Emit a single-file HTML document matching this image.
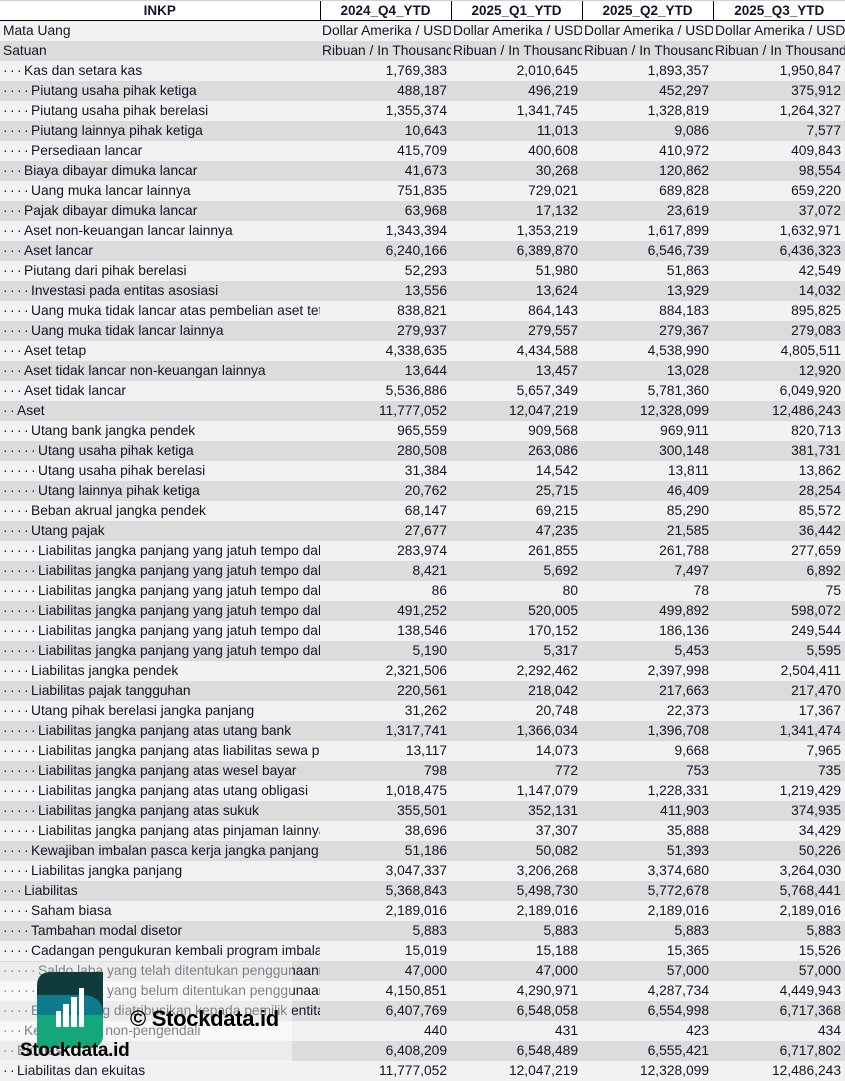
<!DOCTYPE html>
<html><head><meta charset="utf-8"><style>
body{margin:0;width:845px;height:1081px;overflow:hidden;background:#fff;font-family:"Liberation Sans",Arial,sans-serif;font-size:13.8px;color:#141428;position:relative}
table{border-collapse:collapse;table-layout:fixed;width:845px;position:absolute;top:0;left:0}
td{height:20px;padding:0;white-space:nowrap;overflow:hidden;line-height:20px}
col.a{width:320px}col.b{width:131px}col.c{width:131px}col.d{width:131px}col.e{width:132px}
tr.h td{background:#fff;font-weight:bold;text-align:center;border-bottom:1.5px solid #000;border-left:1px solid #000;border-top:1px solid #d0d0d0;height:19px;line-height:19px;font-size:13.5px}
tr.h td:first-child{border-left:none}
tr:nth-child(even) td{background:#f2f2f2}
tr:nth-child(odd) td{background:#dcdcdc}
tr.h td{background:#fff!important}
td.l{padding-left:3px;text-align:left}
td.n{text-align:right;padding-right:4px}
td.t{text-align:left;padding-left:2px;text-overflow:clip}
i{font-style:normal;display:inline-block;width:7px;text-align:left}
.ov{position:absolute;left:0;top:962px;width:292px;height:100px;background:rgba(255,255,255,0.45)}
.wm1{position:absolute;left:130px;top:1006px;font-weight:bold;font-size:22px;color:#000;letter-spacing:-0.3px}
.wm2{position:absolute;left:20px;top:1040px;font-weight:bold;font-size:19px;color:#000;letter-spacing:-0.3px}
</style></head><body>
<table>
<colgroup><col class="a"><col class="b"><col class="c"><col class="d"><col class="e"></colgroup>
<tr class="h"><td>INKP</td><td>2024_Q4_YTD</td><td>2025_Q1_YTD</td><td>2025_Q2_YTD</td><td>2025_Q3_YTD</td></tr>
<tr><td class="l">Mata Uang</td><td class="t">Dollar Amerika / USD</td><td class="t">Dollar Amerika / USD</td><td class="t">Dollar Amerika / USD</td><td class="t">Dollar Amerika / USD</td></tr>
<tr><td class="l">Satuan</td><td class="t">Ribuan / In Thousand</td><td class="t">Ribuan / In Thousand</td><td class="t">Ribuan / In Thousand</td><td class="t">Ribuan / In Thousand</td></tr>
<tr><td class="l"><i>·</i><i>·</i><i>·</i>Kas dan setara kas</td><td class="n">1,769,383</td><td class="n">2,010,645</td><td class="n">1,893,357</td><td class="n">1,950,847</td></tr>
<tr><td class="l"><i>·</i><i>·</i><i>·</i><i>·</i>Piutang usaha pihak ketiga</td><td class="n">488,187</td><td class="n">496,219</td><td class="n">452,297</td><td class="n">375,912</td></tr>
<tr><td class="l"><i>·</i><i>·</i><i>·</i><i>·</i>Piutang usaha pihak berelasi</td><td class="n">1,355,374</td><td class="n">1,341,745</td><td class="n">1,328,819</td><td class="n">1,264,327</td></tr>
<tr><td class="l"><i>·</i><i>·</i><i>·</i><i>·</i>Piutang lainnya pihak ketiga</td><td class="n">10,643</td><td class="n">11,013</td><td class="n">9,086</td><td class="n">7,577</td></tr>
<tr><td class="l"><i>·</i><i>·</i><i>·</i><i>·</i>Persediaan lancar</td><td class="n">415,709</td><td class="n">400,608</td><td class="n">410,972</td><td class="n">409,843</td></tr>
<tr><td class="l"><i>·</i><i>·</i><i>·</i>Biaya dibayar dimuka lancar</td><td class="n">41,673</td><td class="n">30,268</td><td class="n">120,862</td><td class="n">98,554</td></tr>
<tr><td class="l"><i>·</i><i>·</i><i>·</i><i>·</i>Uang muka lancar lainnya</td><td class="n">751,835</td><td class="n">729,021</td><td class="n">689,828</td><td class="n">659,220</td></tr>
<tr><td class="l"><i>·</i><i>·</i><i>·</i>Pajak dibayar dimuka lancar</td><td class="n">63,968</td><td class="n">17,132</td><td class="n">23,619</td><td class="n">37,072</td></tr>
<tr><td class="l"><i>·</i><i>·</i><i>·</i>Aset non-keuangan lancar lainnya</td><td class="n">1,343,394</td><td class="n">1,353,219</td><td class="n">1,617,899</td><td class="n">1,632,971</td></tr>
<tr><td class="l"><i>·</i><i>·</i><i>·</i>Aset lancar</td><td class="n">6,240,166</td><td class="n">6,389,870</td><td class="n">6,546,739</td><td class="n">6,436,323</td></tr>
<tr><td class="l"><i>·</i><i>·</i><i>·</i>Piutang dari pihak berelasi</td><td class="n">52,293</td><td class="n">51,980</td><td class="n">51,863</td><td class="n">42,549</td></tr>
<tr><td class="l"><i>·</i><i>·</i><i>·</i><i>·</i>Investasi pada entitas asosiasi</td><td class="n">13,556</td><td class="n">13,624</td><td class="n">13,929</td><td class="n">14,032</td></tr>
<tr><td class="l"><i>·</i><i>·</i><i>·</i><i>·</i>Uang muka tidak lancar atas pembelian aset tetap</td><td class="n">838,821</td><td class="n">864,143</td><td class="n">884,183</td><td class="n">895,825</td></tr>
<tr><td class="l"><i>·</i><i>·</i><i>·</i><i>·</i>Uang muka tidak lancar lainnya</td><td class="n">279,937</td><td class="n">279,557</td><td class="n">279,367</td><td class="n">279,083</td></tr>
<tr><td class="l"><i>·</i><i>·</i><i>·</i>Aset tetap</td><td class="n">4,338,635</td><td class="n">4,434,588</td><td class="n">4,538,990</td><td class="n">4,805,511</td></tr>
<tr><td class="l"><i>·</i><i>·</i><i>·</i>Aset tidak lancar non-keuangan lainnya</td><td class="n">13,644</td><td class="n">13,457</td><td class="n">13,028</td><td class="n">12,920</td></tr>
<tr><td class="l"><i>·</i><i>·</i><i>·</i>Aset tidak lancar</td><td class="n">5,536,886</td><td class="n">5,657,349</td><td class="n">5,781,360</td><td class="n">6,049,920</td></tr>
<tr><td class="l"><i>·</i><i>·</i>Aset</td><td class="n">11,777,052</td><td class="n">12,047,219</td><td class="n">12,328,099</td><td class="n">12,486,243</td></tr>
<tr><td class="l"><i>·</i><i>·</i><i>·</i><i>·</i>Utang bank jangka pendek</td><td class="n">965,559</td><td class="n">909,568</td><td class="n">969,911</td><td class="n">820,713</td></tr>
<tr><td class="l"><i>·</i><i>·</i><i>·</i><i>·</i><i>·</i>Utang usaha pihak ketiga</td><td class="n">280,508</td><td class="n">263,086</td><td class="n">300,148</td><td class="n">381,731</td></tr>
<tr><td class="l"><i>·</i><i>·</i><i>·</i><i>·</i><i>·</i>Utang usaha pihak berelasi</td><td class="n">31,384</td><td class="n">14,542</td><td class="n">13,811</td><td class="n">13,862</td></tr>
<tr><td class="l"><i>·</i><i>·</i><i>·</i><i>·</i><i>·</i>Utang lainnya pihak ketiga</td><td class="n">20,762</td><td class="n">25,715</td><td class="n">46,409</td><td class="n">28,254</td></tr>
<tr><td class="l"><i>·</i><i>·</i><i>·</i><i>·</i>Beban akrual jangka pendek</td><td class="n">68,147</td><td class="n">69,215</td><td class="n">85,290</td><td class="n">85,572</td></tr>
<tr><td class="l"><i>·</i><i>·</i><i>·</i><i>·</i>Utang pajak</td><td class="n">27,677</td><td class="n">47,235</td><td class="n">21,585</td><td class="n">36,442</td></tr>
<tr><td class="l"><i>·</i><i>·</i><i>·</i><i>·</i><i>·</i>Liabilitas jangka panjang yang jatuh tempo dalam</td><td class="n">283,974</td><td class="n">261,855</td><td class="n">261,788</td><td class="n">277,659</td></tr>
<tr><td class="l"><i>·</i><i>·</i><i>·</i><i>·</i><i>·</i>Liabilitas jangka panjang yang jatuh tempo dalam</td><td class="n">8,421</td><td class="n">5,692</td><td class="n">7,497</td><td class="n">6,892</td></tr>
<tr><td class="l"><i>·</i><i>·</i><i>·</i><i>·</i><i>·</i>Liabilitas jangka panjang yang jatuh tempo dalam</td><td class="n">86</td><td class="n">80</td><td class="n">78</td><td class="n">75</td></tr>
<tr><td class="l"><i>·</i><i>·</i><i>·</i><i>·</i><i>·</i>Liabilitas jangka panjang yang jatuh tempo dalam</td><td class="n">491,252</td><td class="n">520,005</td><td class="n">499,892</td><td class="n">598,072</td></tr>
<tr><td class="l"><i>·</i><i>·</i><i>·</i><i>·</i><i>·</i>Liabilitas jangka panjang yang jatuh tempo dalam</td><td class="n">138,546</td><td class="n">170,152</td><td class="n">186,136</td><td class="n">249,544</td></tr>
<tr><td class="l"><i>·</i><i>·</i><i>·</i><i>·</i><i>·</i>Liabilitas jangka panjang yang jatuh tempo dalam</td><td class="n">5,190</td><td class="n">5,317</td><td class="n">5,453</td><td class="n">5,595</td></tr>
<tr><td class="l"><i>·</i><i>·</i><i>·</i><i>·</i>Liabilitas jangka pendek</td><td class="n">2,321,506</td><td class="n">2,292,462</td><td class="n">2,397,998</td><td class="n">2,504,411</td></tr>
<tr><td class="l"><i>·</i><i>·</i><i>·</i><i>·</i>Liabilitas pajak tangguhan</td><td class="n">220,561</td><td class="n">218,042</td><td class="n">217,663</td><td class="n">217,470</td></tr>
<tr><td class="l"><i>·</i><i>·</i><i>·</i><i>·</i>Utang pihak berelasi jangka panjang</td><td class="n">31,262</td><td class="n">20,748</td><td class="n">22,373</td><td class="n">17,367</td></tr>
<tr><td class="l"><i>·</i><i>·</i><i>·</i><i>·</i><i>·</i>Liabilitas jangka panjang atas utang bank</td><td class="n">1,317,741</td><td class="n">1,366,034</td><td class="n">1,396,708</td><td class="n">1,341,474</td></tr>
<tr><td class="l"><i>·</i><i>·</i><i>·</i><i>·</i><i>·</i>Liabilitas jangka panjang atas liabilitas sewa pembiayaan</td><td class="n">13,117</td><td class="n">14,073</td><td class="n">9,668</td><td class="n">7,965</td></tr>
<tr><td class="l"><i>·</i><i>·</i><i>·</i><i>·</i><i>·</i>Liabilitas jangka panjang atas wesel bayar</td><td class="n">798</td><td class="n">772</td><td class="n">753</td><td class="n">735</td></tr>
<tr><td class="l"><i>·</i><i>·</i><i>·</i><i>·</i><i>·</i>Liabilitas jangka panjang atas utang obligasi</td><td class="n">1,018,475</td><td class="n">1,147,079</td><td class="n">1,228,331</td><td class="n">1,219,429</td></tr>
<tr><td class="l"><i>·</i><i>·</i><i>·</i><i>·</i><i>·</i>Liabilitas jangka panjang atas sukuk</td><td class="n">355,501</td><td class="n">352,131</td><td class="n">411,903</td><td class="n">374,935</td></tr>
<tr><td class="l"><i>·</i><i>·</i><i>·</i><i>·</i><i>·</i>Liabilitas jangka panjang atas pinjaman lainnya</td><td class="n">38,696</td><td class="n">37,307</td><td class="n">35,888</td><td class="n">34,429</td></tr>
<tr><td class="l"><i>·</i><i>·</i><i>·</i><i>·</i>Kewajiban imbalan pasca kerja jangka panjang</td><td class="n">51,186</td><td class="n">50,082</td><td class="n">51,393</td><td class="n">50,226</td></tr>
<tr><td class="l"><i>·</i><i>·</i><i>·</i><i>·</i>Liabilitas jangka panjang</td><td class="n">3,047,337</td><td class="n">3,206,268</td><td class="n">3,374,680</td><td class="n">3,264,030</td></tr>
<tr><td class="l"><i>·</i><i>·</i><i>·</i>Liabilitas</td><td class="n">5,368,843</td><td class="n">5,498,730</td><td class="n">5,772,678</td><td class="n">5,768,441</td></tr>
<tr><td class="l"><i>·</i><i>·</i><i>·</i><i>·</i>Saham biasa</td><td class="n">2,189,016</td><td class="n">2,189,016</td><td class="n">2,189,016</td><td class="n">2,189,016</td></tr>
<tr><td class="l"><i>·</i><i>·</i><i>·</i><i>·</i>Tambahan modal disetor</td><td class="n">5,883</td><td class="n">5,883</td><td class="n">5,883</td><td class="n">5,883</td></tr>
<tr><td class="l"><i>·</i><i>·</i><i>·</i><i>·</i>Cadangan pengukuran kembali program imbalan</td><td class="n">15,019</td><td class="n">15,188</td><td class="n">15,365</td><td class="n">15,526</td></tr>
<tr><td class="l"><i>·</i><i>·</i><i>·</i><i>·</i><i>·</i>Saldo laba yang telah ditentukan penggunaannya</td><td class="n">47,000</td><td class="n">47,000</td><td class="n">57,000</td><td class="n">57,000</td></tr>
<tr><td class="l"><i>·</i><i>·</i><i>·</i><i>·</i><i>·</i>Saldo laba yang belum ditentukan penggunaannya</td><td class="n">4,150,851</td><td class="n">4,290,971</td><td class="n">4,287,734</td><td class="n">4,449,943</td></tr>
<tr><td class="l"><i>·</i><i>·</i><i>·</i><i>·</i>Ekuitas yang diatribusikan kepada pemilik entitas induk</td><td class="n">6,407,769</td><td class="n">6,548,058</td><td class="n">6,554,998</td><td class="n">6,717,368</td></tr>
<tr><td class="l"><i>·</i><i>·</i><i>·</i>Kepentingan non-pengendali</td><td class="n">440</td><td class="n">431</td><td class="n">423</td><td class="n">434</td></tr>
<tr><td class="l"><i>·</i><i>·</i>Ekuitas</td><td class="n">6,408,209</td><td class="n">6,548,489</td><td class="n">6,555,421</td><td class="n">6,717,802</td></tr>
<tr><td class="l"><i>·</i><i>·</i>Liabilitas dan ekuitas</td><td class="n">11,777,052</td><td class="n">12,047,219</td><td class="n">12,328,099</td><td class="n">12,486,243</td></tr>
</table>
<div class="ov"></div>
<svg style="position:absolute;left:37px;top:972px" width="66" height="76" viewBox="0 0 66 76">
<defs><clipPath id="c"><path d="M14 0H66V62Q66 76 52 76H0V14Q0 0 14 0Z"/></clipPath></defs>
<g clip-path="url(#c)">
<rect width="66" height="76" fill="#0f3b3c"/>
<path d="M0 23H44Q66 23 66 43H0Z" fill="#0b7b8d"/>
<path d="M0 43H66V76H0Z" fill="#14a77c"/>
<rect x="19" y="39" width="5" height="16" fill="#fff"/>
<rect x="26" y="32" width="6" height="23" fill="#fff"/>
<rect x="34" y="25" width="6" height="30" fill="#fff"/>
<rect x="42" y="16" width="5" height="39" fill="#fff"/>
</g></svg>
<div class="wm1">© Stockdata.id</div>
<div class="wm2">Stockdata.id</div>
</body></html>
